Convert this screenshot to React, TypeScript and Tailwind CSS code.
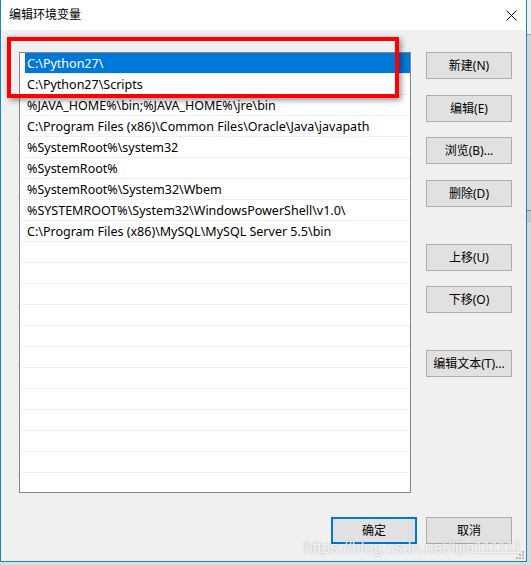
import { Fragment } from 'react';

const paths = [
  'C:\\Python27\\',
  'C:\\Python27\\Scripts',
  '%JAVA_HOME%\\bin;%JAVA_HOME%\\jre\\bin',
  'C:\\Program Files (x86)\\Common Files\\Oracle\\Java\\javapath',
  '%SystemRoot%\\system32',
  '%SystemRoot%',
  '%SystemRoot%\\System32\\Wbem',
  '%SYSTEMROOT%\\System32\\WindowsPowerShell\\v1.0\\',
  'C:\\Program Files (x86)\\MySQL\\MySQL Server 5.5\\bin',
];

const rows = [...paths, ...Array(12).fill('')];

const font = 'font-["Noto_Sans","Noto_Sans_CJK_SC",sans-serif]';

function Btn({ label, className = '' }: { label: string; className?: string }) {
  return (
    <div
      className={[
        'w-[86px] h-[27px] flex items-center justify-center bg-[#e1e1e1] border border-[#adadad] text-[12px] text-black',
        className,
      ].join(' ')}
    >
      {label}
    </div>
  );
}

export default function App() {
  return (
    <div className={`w-[531px] h-[565px] bg-[#dcdcdc] flex flex-col overflow-hidden ${font}`}>
      <div className="flex">
        {/* Dialog */}
        <div className="relative w-[527px] h-[562px] flex flex-col bg-[#f0f0f0] border-x border-b border-[#1883d7]">
          {/* Title bar */}
          <div className="h-[30px] bg-white flex items-center justify-between pl-[8px] pr-[9px]">
            <span className="text-[12px] text-black">编辑环境变量</span>
            <svg width="11" height="11" viewBox="0 0 11 11">
              <path d="M0.5 0.5 L10.5 10.5 M10.5 0.5 L0.5 10.5" stroke="#000" strokeWidth="1" />
            </svg>
          </div>

          <div className="flex pl-[18px] pt-[22px]">
            {/* Path list */}
            <div className="w-[392px] h-[441px] border border-[#828790] bg-white overflow-hidden pl-px">
              {rows.map((p, i) => (
                <div key={i} className="h-[21px] border-b border-[#f0f0f0]">
                  <div
                    className={[
                      'ml-[4px] pl-[2px] h-[20px] leading-[21px] text-[12.5px] whitespace-nowrap',
                      i === 0 ? 'bg-[#0078d7] text-white' : 'text-black',
                    ].join(' ')}
                  >
                    {p}
                  </div>
                </div>
              ))}
            </div>

            {/* Side buttons */}
            <div className="ml-[15px] flex flex-col">
              <Btn label="新建(N)" />
              <Btn label="编辑(E)" className="mt-[16px]" />
              <Btn label="浏览(B)..." className="mt-[15px]" />
              <Btn label="删除(D)" className="mt-[16px]" />
              <Btn label="上移(U)" className="mt-[37px]" />
              <Btn label="下移(O)" className="mt-[15px]" />
              <Btn label="编辑文本(T)..." className="mt-[37px]" />
            </div>
          </div>

          {/* OK / Cancel */}
          <div className="flex justify-end gap-[9px] pr-[14px] mt-[24px]">
            <div className="w-[86px] h-[27px] flex items-center justify-center bg-[#e1e1e1] border-2 border-[#0078d7] text-[12px] text-black">
              确定
            </div>
            <Btn label="取消" />
          </div>

          {/* resize grip */}
          <div className="absolute right-[2px] bottom-[2px] grid grid-cols-3 gap-px">
            {[0, 0, 1, 0, 1, 1, 1, 1, 1].map((d, i) => (
              <Fragment key={i}>
                <div className={d ? 'w-[2px] h-[2px] bg-[#b8b8b8]' : 'w-[2px] h-[2px]'} />
              </Fragment>
            ))}
          </div>

          {/* red annotation box */}
          <div className="absolute left-[6px] top-[37px] w-[392px] h-[61px] border-4 border-[#ff0000] shadow-[2px_2px_6px_rgba(0,0,0,0.45)]" />

          {/* watermark */}
          <div className='absolute right-[4px] top-[536px] text-[16px] font-["Liberation_Sans",sans-serif] text-white/80 [text-shadow:0_0_2px_rgba(0,0,0,0.3)]'>
            https://blog.csdn.net/lijia111111
          </div>
        </div>

        {/* window behind, right edge */}
        <div className="w-[4px] flex flex-col">
          <div className="h-[34px] bg-[#f0f0f0]" />
          <div className="h-px bg-[#a0a0a0]" />
          <div className="h-[175px] bg-[#d4d4d4]" />
          <div className="h-px bg-[#888]" />
          <div className="h-[10px] bg-[#c8c8c8]" />
          <div className="h-px bg-[#bbb]" />
          <div className="flex-1 bg-[#d8d8d8]" />
        </div>
      </div>
      <div className="flex-1 bg-[#dcdcdc]" />
    </div>
  );
}
